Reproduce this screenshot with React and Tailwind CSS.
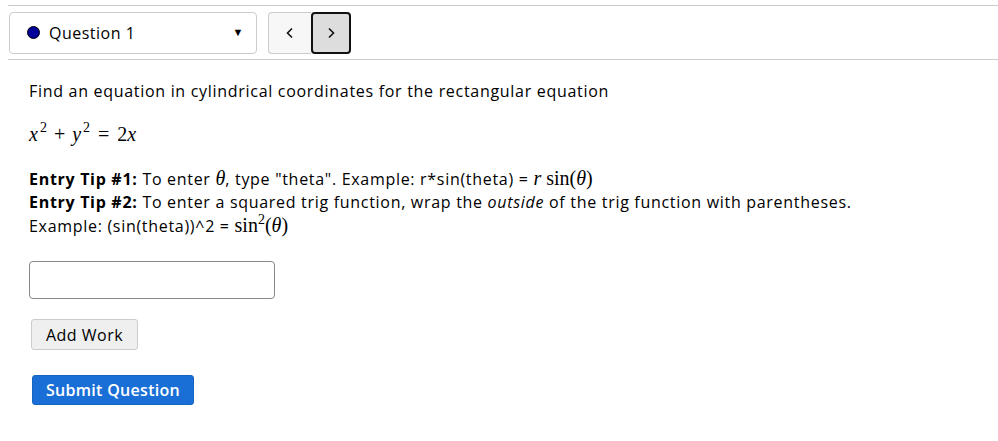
import React from "react";

const body = { fontFamily: '"Open Sans", "Noto Sans", sans-serif' };
const mathFont = "font-['Liberation_Serif',serif] tracking-normal";

function M({ children }) {
  return <span className={`${mathFont} italic text-[20px]`}>{children}</span>;
}

function Chevron({ dir }) {
  return (
    <svg width="10" height="12" viewBox="0 0 10 12" className="mx-auto">
      <path
        d={dir === "left" ? "M7 1.5 L2.5 6 L7 10.5" : "M3 1.5 L7.5 6 L3 10.5"}
        fill="none"
        stroke="#111"
        strokeWidth="1.6"
      />
    </svg>
  );
}

export default function App() {
  return (
    <div className="min-h-screen bg-white text-black text-[16px] tracking-[0.7px]" style={body}>
      <div className="ml-2 mt-[5px] flex items-center gap-[11px] border-y border-[#cccccc] h-[55px] pl-[1px]">
        <div className="flex h-[42px] w-[248px] items-center rounded-[4px] border border-[#cccccc] pl-[17px] pr-[12px]">
          <span className="h-[13px] w-[13px] rounded-full border border-black bg-[#000099]" />
          <span className="ml-[9px] text-[16px] tracking-[0.5px]">Question 1</span>
          <span className="ml-auto text-[11px]">▼</span>
        </div>
        <div className="flex h-[42px]">
          <button className="flex w-[43px] items-center rounded-l-[4px] border border-r-0 border-[#cccccc] bg-[#f7f7f7]">
            <Chevron dir="left" />
          </button>
          <button className="flex w-[40px] items-center rounded-[4px] border-2 border-[#111111] bg-[#dddddd]">
            <Chevron dir="right" />
          </button>
        </div>
      </div>

      <div className="pl-[29px] pt-[20px]">
        <p className="leading-[23px]">
          Find an equation in cylindrical coordinates for the rectangular equation
        </p>
        <p className={`${mathFont} mt-[18px] text-[20px] leading-[26px]`}>
          <i>x</i>
          <sup className="-top-[9px] ml-[2px] text-[14px]">2</sup>
          <span className="mx-[7px]">+</span>
          <i>y</i>
          <sup className="-top-[9px] ml-[2px] text-[14px]">2</sup>
          <span className="mx-[8px]">=</span>2<i>x</i>
        </p>

        <div className="mt-[20px] leading-[23px]">
          <div>
            <b>Entry Tip #1:</b> To enter <M>θ</M>, type "theta". Example: r*sin(theta) ={" "}
            <span className={`${mathFont} text-[20px]`}>
              <i>r</i> sin(<i>θ</i>)
            </span>
          </div>
          <div>
            <b>Entry Tip #2:</b> To enter a squared trig function, wrap the <i>outside</i> of the
            trig function with parentheses.
          </div>
          <div>
            Example: (sin(theta))^2 ={" "}
            <span className={`${mathFont} text-[20px]`}>
              sin<sup className="-top-[8px] text-[14px]">2</sup>(<i>θ</i>)
            </span>
          </div>
        </div>

        <input
          type="text"
          className="mt-[23px] block h-[38px] w-[246px] rounded-[4px] border border-[#888888] px-2"
        />

        <button className="mt-[20px] ml-[2px] block h-[31px] w-[107px] rounded-[3px] border border-[#cccccc] bg-[#efefef] text-[16px] tracking-[0.5px]">
          Add Work
        </button>

        <button className="mt-[25px] ml-[3px] block h-[30px] w-[162px] rounded-[3px] border border-[#1565c0] bg-[#1a6fd6] text-[16px] font-semibold text-white tracking-[0.3px]">
          Submit Question
        </button>
      </div>
    </div>
  );
}
